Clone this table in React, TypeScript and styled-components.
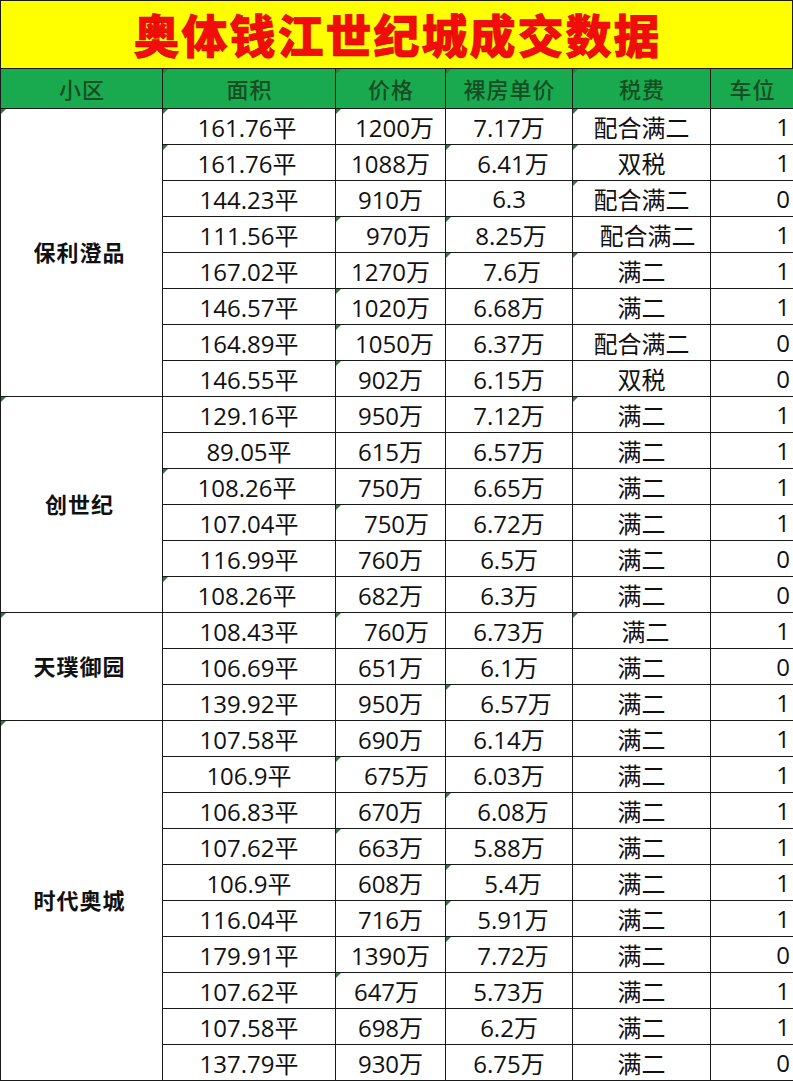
import React from 'react';
import styled, { createGlobalStyle } from 'styled-components';

type Row = {
  area: string;
  price: string;
  unit: string;
  tax: string;
  park: string;
  shift?: [number, number, number, number];
  marks?: number[];
};

type Group = { name: string; rows: Row[] };

const groups: Group[] = [
  {
    name: '保利澄品',
    rows: [
      { area: '161.76平', price: '1200万', unit: '7.17万', tax: '配合满二', park: '1', shift: [-2, 4, 0, 0], marks: [1, 2, 4] },
      { area: '161.76平', price: '1088万', unit: '6.41万', tax: '双税', park: '1', shift: [-2, 0, 4, 0], marks: [1, 3, 4] },
      { area: '144.23平', price: '910万', unit: '6.3', tax: '配合满二', park: '0', marks: [4] },
      { area: '111.56平', price: '970万', unit: '8.25万', tax: '配合满二', park: '1', shift: [0, 8, 2, 6], marks: [2, 3] },
      { area: '167.02平', price: '1270万', unit: '7.6万', tax: '满二', park: '1', shift: [0, 0, 3, 0], marks: [3, 4] },
      { area: '146.57平', price: '1020万', unit: '6.68万', tax: '满二', park: '1', marks: [2] },
      { area: '164.89平', price: '1050万', unit: '6.37万', tax: '配合满二', park: '0', shift: [0, 4, 0, 0], marks: [2] },
      { area: '146.55平', price: '902万', unit: '6.15万', tax: '双税', park: '0', marks: [2] },
    ],
  },
  {
    name: '创世纪',
    rows: [
      { area: '129.16平', price: '950万', unit: '7.12万', tax: '满二', park: '1', marks: [4] },
      { area: '89.05平', price: '615万', unit: '6.57万', tax: '满二', park: '1' },
      { area: '108.26平', price: '750万', unit: '6.65万', tax: '满二', park: '1', shift: [-2, 0, 0, 0], marks: [1] },
      { area: '107.04平', price: '750万', unit: '6.72万', tax: '满二', park: '1', shift: [0, 6, 0, 0], marks: [2] },
      { area: '116.99平', price: '760万', unit: '6.5万', tax: '满二', park: '0' },
      { area: '108.26平', price: '682万', unit: '6.3万', tax: '满二', park: '0', shift: [-2, 0, 0, 0], marks: [1] },
    ],
  },
  {
    name: '天璞御园',
    rows: [
      { area: '108.43平', price: '760万', unit: '6.73万', tax: '满二', park: '1', shift: [0, 6, 0, 4], marks: [2, 4] },
      { area: '106.69平', price: '651万', unit: '6.1万', tax: '满二', park: '0' },
      { area: '139.92平', price: '950万', unit: '6.57万', tax: '满二', park: '1', shift: [0, 0, 7, 0], marks: [3] },
    ],
  },
  {
    name: '时代奥城',
    rows: [
      { area: '107.58平', price: '690万', unit: '6.14万', tax: '满二', park: '1' },
      { area: '106.9平', price: '675万', unit: '6.03万', tax: '满二', park: '1', shift: [0, 6, 0, 0], marks: [2] },
      { area: '106.83平', price: '670万', unit: '6.08万', tax: '满二', park: '1', shift: [0, 0, 4, 0], marks: [3] },
      { area: '107.62平', price: '663万', unit: '5.88万', tax: '满二', park: '1', marks: [2] },
      { area: '106.9平', price: '608万', unit: '5.4万', tax: '满二', park: '1', shift: [0, 0, 4, 0], marks: [3] },
      { area: '116.04平', price: '716万', unit: '5.91万', tax: '满二', park: '1', shift: [0, 0, 4, 0], marks: [3] },
      { area: '179.91平', price: '1390万', unit: '7.72万', tax: '满二', park: '0', shift: [0, 0, 4, 0], marks: [3] },
      { area: '107.62平', price: '647万', unit: '5.73万', tax: '满二', park: '1', shift: [0, -4, 0, 0], marks: [2] },
      { area: '107.58平', price: '698万', unit: '6.2万', tax: '满二', park: '1' },
      { area: '137.79平', price: '930万', unit: '6.75万', tax: '满二', park: '0' },
    ],
  },
];

const headers = ['小区', '面积', '价格', '裸房单价', '税费', '车位'];

function App() {
  return (
    <>
      <GlobalStyle />
      <Sheet>
        <Title>奥体钱江世纪城成交数据</Title>
        <Table>
          {headers.map((h, i) => (
            <HeadCell key={h} $mark={i > 0 && i < 5}>
              {h}
            </HeadCell>
          ))}
          {groups.map((g) => (
            <React.Fragment key={g.name}>
              <GroupCell $span={g.rows.length}>{g.name}</GroupCell>
              {g.rows.map((r, ri) => {
                const s = r.shift ?? [0, 0, 0, 0];
                const m = r.marks ?? [];
                const vals = [r.area, r.price, r.unit, r.tax];
                return (
                  <React.Fragment key={ri}>
                    {vals.map((v, ci) => (
                      <Cell key={ci} $mark={m.includes(ci + 1)}>
                        <Value $shift={s[ci]}>{v}</Value>
                      </Cell>
                    ))}
                    <ParkCell>{r.park}</ParkCell>
                  </React.Fragment>
                );
              })}
            </React.Fragment>
          ))}
        </Table>
      </Sheet>
    </>
  );
}

export default App;

const GlobalStyle = createGlobalStyle`
  html, body {
    margin: 0;
    padding: 0;
    background: #ffffff;
  }
  * {
    box-sizing: border-box;
  }
`;

const Sheet = styled.main`
  width: 793px;
  height: 1081px;
  overflow: hidden;
  background: #ffffff;
  font-family: 'Open Sans', 'Noto Sans CJK SC', sans-serif;
  color: #111111;
`;

const Title = styled.h1`
  margin: 0;
  height: 68px;
  display: flex;
  align-items: center;
  justify-content: center;
  background: #ffff00;
  border: 1px solid #1a1a1a;
  border-bottom: none;
  color: #f20d0d;
  font-family: 'Noto Sans CJK SC', sans-serif;
  font-weight: 900;
  font-size: 46px;
  letter-spacing: 2px;
  padding: 0 0 3px 2px;
  -webkit-text-stroke: 0.6px #d40000;
`;

const Table = styled.section`
  display: grid;
  grid-template-columns: 162px 173px 110px 127px 138px 83px;
  grid-template-rows: 40px repeat(27, 36px);
  border-left: 1px solid #1a1a1a;
  border-top: 1px solid #1a1a1a;
`;

const Marked = styled.div<{ $mark?: boolean }>`
  position: relative;
  border-right: 1px solid #1a1a1a;
  border-bottom: 1px solid #1a1a1a;

  &::before {
    content: '';
    display: ${({ $mark }) => ($mark ? 'block' : 'none')};
    position: absolute;
    left: 0;
    top: 0;
    border-top: 5px solid #2f7d3a;
    border-right: 5px solid transparent;
  }
`;

const HeadCell = styled(Marked)`
  display: flex;
  align-items: center;
  justify-content: center;
  background: #19a94f;
  color: #174d23;
  font-family: 'Noto Sans CJK SC', sans-serif;
  font-weight: 500;
  font-size: 22px;
  letter-spacing: 1px;
  padding: 0 0 2px 1px;
`;

const GroupCell = styled(Marked).attrs({ $mark: true })<{ $span: number }>`
  grid-row: span ${({ $span }) => $span};
  display: flex;
  align-items: center;
  justify-content: center;
  font-family: 'Noto Sans CJK SC', sans-serif;
  font-weight: 700;
  font-size: 22px;
  letter-spacing: 1px;
  color: #111111;
  padding: 0 4px 4px 0;
`;

const Cell = styled(Marked)`
  display: flex;
  align-items: center;
  justify-content: center;
  font-size: 24px;
  white-space: nowrap;
`;

const Value = styled.span<{ $shift: number }>`
  display: inline-block;
  transform: translateX(${({ $shift }) => $shift}px);
`;

const ParkCell = styled(Marked)`
  display: flex;
  align-items: center;
  justify-content: flex-end;
  padding-right: 3px;
  font-size: 24px;
`;
